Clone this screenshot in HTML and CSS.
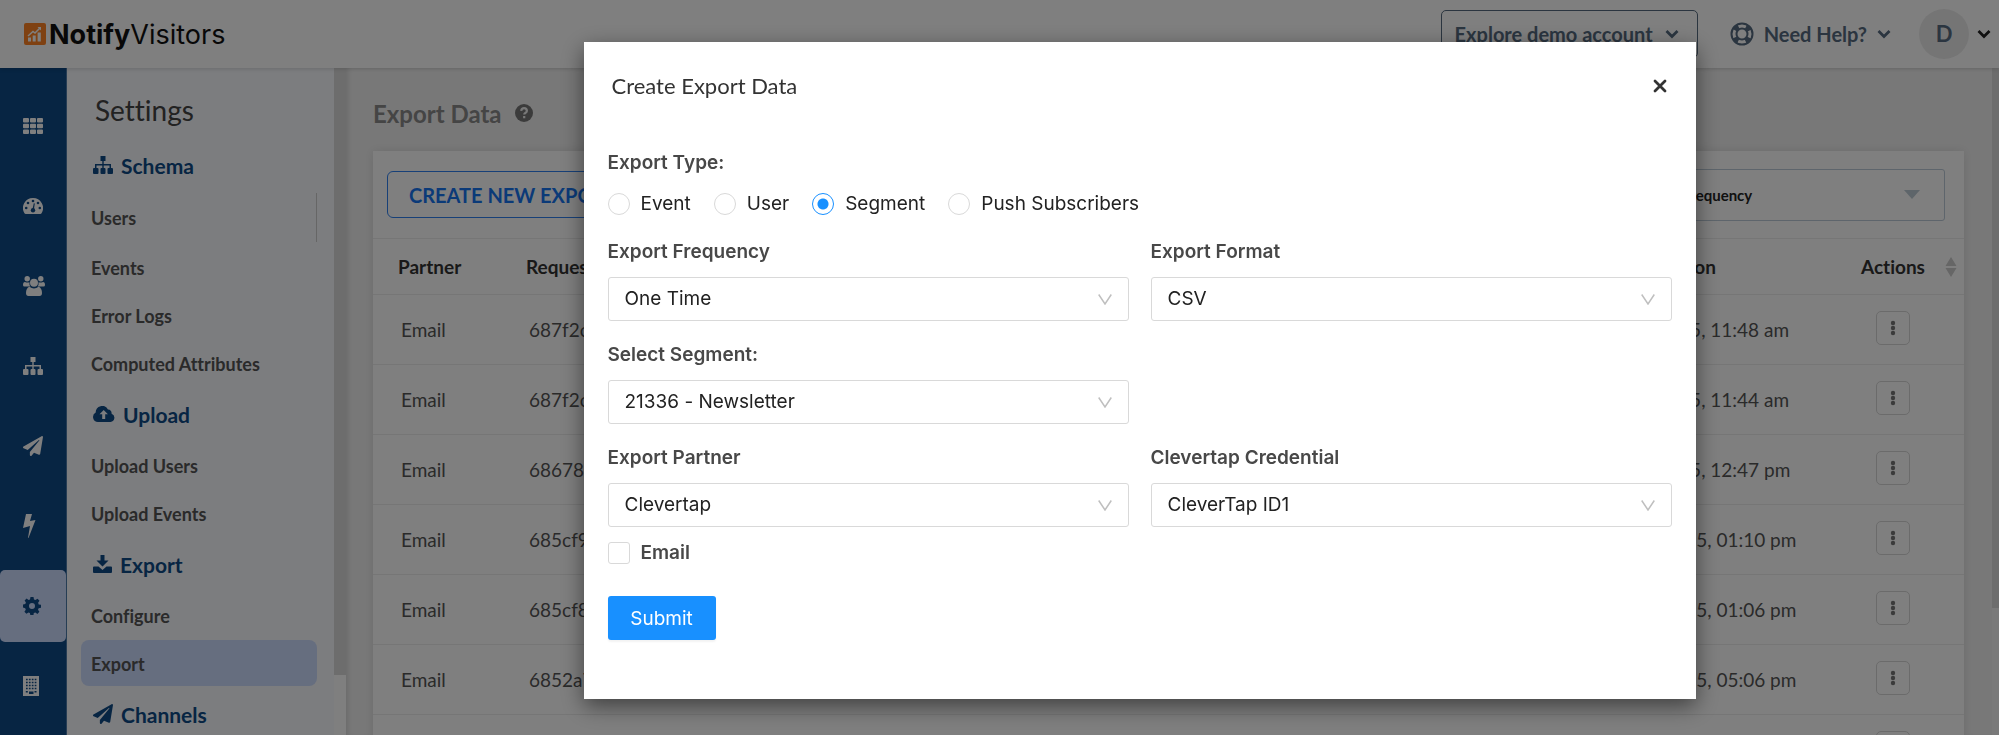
FILE: index.html
```
<!DOCTYPE html>
<html lang="en">
<head>
  <meta charset="UTF-8" />
  <meta name="viewport" content="width=device-width, initial-scale=1" />
  <title>Export Data - NotifyVisitors</title>
  <link rel="stylesheet" href="styles.css">
</head>
<body>
  <!-- ICONS -->
  <svg class="sprite" aria-hidden="true">
    <symbol id="i-sitemap" viewBox="0 0 20 18">
      <path d="M7.500 0h5v5h-1.800v3H18v4h1q1 0 1 1v4q0 1-1 1h-3.500q-1 0-1-1v-4q0-1 1-1h1V9.400h-5.800V12h.8q1 0 1 1v4q0 1-1 1H8.500q-1 0-1-1v-4q0-1 1-1h.8V9.400H3.500V12h1q1 0 1 1v4q0 1-1 1H1q-1 0-1-1v-4q0-1 1-1h1V8h7.300V5H7.500z"/>
    </symbol>
    <symbol id="i-plane" viewBox="0 0 512 512">
      <path d="M476 3.200L12.500 270.600c-18.100 10.400-15.800 35.600 2.200 43.200L121 358.400l287.300-253.200c5.500-4.900 13.300 2.600 8.600 8.300L176 407v80.500c0 23.600 28.500 32.900 42.500 15.800L282 426l124.600 52.200c14.200 6 30.400-2.900 33-18.200l72-432C515 7.800 493.300-6.800 476 3.200z"/>
    </symbol>
    <symbol id="i-chevron" viewBox="0 0 14 10">
      <path d="M1.500 2l5.500 5.500L12.500 2" fill="none" stroke="currentColor" stroke-width="2.800"/>
    </symbol>
    <symbol id="i-dots" viewBox="0 0 6 16">
      <circle cx="3" cy="3" r="2.200"/><circle cx="3" cy="8" r="2.200"/><circle cx="3" cy="13" r="2.200"/>
    </symbol>
  </svg>

  <!-- HEADER -->
  <header class="topbar">
    <a class="logo" href="#">
      <svg width="22" height="22" viewBox="0 0 22 22">
        <rect width="22" height="22" rx="2" fill="#ff8324"/>
        <path d="M4 18.500v-4h3v4zM8.700 18.500v-6h3v6zM13.600 18.500V9.500h3.200v9z" fill="#fff"/>
        <path d="M4 13l5-4.500 2 1.500 5-5" fill="none" stroke="#fff" stroke-width="1.500"/>
        <path d="M13.500 4h3.500v3.500z" fill="#fff"/>
      </svg>
      <span><b>Notify</b>Visitors</span>
    </a>
    <div class="topbar-right">
      <button class="btn-demo">Explore demo account <svg class="chevron"><use href="#i-chevron"/></svg></button>
      <button class="btn-help">
        <svg class="ring" width="24" height="24" viewBox="0 0 24 24" stroke="currentColor">
          <circle cx="12" cy="12" r="10.500" stroke-width="2"/>
          <circle cx="12" cy="12" r="5.500" stroke-width="2"/>
          <circle cx="12" cy="12" r="8" stroke-width="5" stroke-dasharray="5 7.566" stroke-dashoffset="-3.800"/>
        </svg>
        Need Help? <svg class="chevron"><use href="#i-chevron"/></svg>
      </button>
      <button class="btn-account"><span class="avatar">D</span> <svg class="chevron"><use href="#i-chevron"/></svg></button>
    </div>
  </header>

  <div class="layout">
    <!-- RAIL -->
    <nav class="rail" aria-label="Main">
      <a href="#" aria-label="Apps">
        <svg width="20" height="16" viewBox="0 0 20 16"><path d="M1 0h4q1 0 1 1v2.500q0 1-1 1H1q-1 0-1-1V1q0-1 1-1zM8 0h4q1 0 1 1v2.500q0 1-1 1H8q-1 0-1-1V1q0-1 1-1zM15 0h4q1 0 1 1v2.500q0 1-1 1h-4q-1 0-1-1V1q0-1 1-1zM1 5.700h4q1 0 1 1v2.500q0 1-1 1H1q-1 0-1-1V6.700q0-1 1-1zM8 5.700h4q1 0 1 1v2.500q0 1-1 1H8q-1 0-1-1V6.700q0-1 1-1zM15 5.700h4q1 0 1 1v2.500q0 1-1 1h-4q-1 0-1-1V6.700q0-1 1-1zM1 11.500h4q1 0 1 1V15q0 1-1 1H1q-1 0-1-1v-2.500q0-1 1-1zM8 11.500h4q1 0 1 1V15q0 1-1 1H8q-1 0-1-1v-2.500q0-1 1-1zM15 11.500h4q1 0 1 1V15q0 1-1 1h-4q-1 0-1-1v-2.500q0-1 1-1z"/></svg>
      </a>
      <a href="#" aria-label="Dashboard">
        <svg width="20" height="16" viewBox="0 0 20 16">
          <path d="M10 0a10 10 0 0 1 8.700 15q-.5 1-1.500 1H2.800q-1 0-1.500-1A10 10 0 0 1 10 0z"/>
          <g fill="#0e4a86"><circle cx="10" cy="3" r="1.300"/><circle cx="5" cy="5" r="1.300"/><circle cx="15" cy="5" r="1.300"/><circle cx="3.200" cy="10" r="1.300"/><circle cx="16.800" cy="10" r="1.300"/><circle cx="10" cy="12.300" r="2.200"/><path d="M10.800 5.200l1 .3-1 6.500H9.300z"/></g>
        </svg>
      </a>
      <a href="#" aria-label="Users">
        <svg width="22" height="20" viewBox="0 0 22 20">
          <circle cx="4.200" cy="2.700" r="2.700"/><circle cx="17.800" cy="2.700" r="2.700"/>
          <path d="M2 6q2 1 4.500.3Q6 9 7.500 10.500H3.500H1.500Q0 10.500 0 9q0-3 2-3zM20 6q-2 1-4.500.3Q16 9 14.500 10.500h6q1.500 0 1.500-1.500 0-3-2-3z"/>
          <circle cx="11" cy="6.700" r="4"/>
          <path d="M6.500 10.800Q11 14 15.500 10.800 19 12 19 17q0 3-2.500 3h-11Q3 20 3 17q0-5 3.500-6.200z"/>
        </svg>
      </a>
      <a href="#" aria-label="Structure"><svg width="20" height="18"><use href="#i-sitemap"/></svg></a>
      <a href="#" aria-label="Campaigns"><svg width="20" height="20"><use href="#i-plane"/></svg></a>
      <a href="#" aria-label="Automation">
        <svg width="13" height="24" viewBox="0 0 13 24"><path d="M3 0h6L7 7l5.500-1L5.500 24l-.5-.3L7 12l-7 2z"/></svg>
      </a>
      <a href="#" class="active" aria-label="Settings">
        <svg width="18" height="18" viewBox="0 0 18 18">
          <path fill-rule="evenodd" d="M7.500 0h3l.5 2.500 1.400.6 2.100-1.400 2 2-1.400 2.100.6 1.600 2.300.4v3l-2.400.5-.6 1.500 1.400 2-2 2.100-2-1.400-1.600.6-.4 2.300h-3l-.5-2.400-1.400-.6-2.100 1.400-2-2 1.400-2.100-.6-1.500L0 10.500v-3L2.300 7l.6-1.500-1.300-2 2-2 2 1.400L7 2.400zM9 6a3 3 0 1 0 0 6 3 3 0 0 0 0-6z"/>
        </svg>
      </a>
      <a href="#" aria-label="Company">
        <svg width="16" height="20" viewBox="0 0 16 20">
          <path d="M0 0h16v20H0z"/>
          <path d="M3 3.500h10.500M3 6.500h10.500M3 9.500h10.500M3 12.500h10.500" stroke="#0e4a86" stroke-width="1.700" stroke-dasharray="1.700 1.200"/>
          <path d="M2.800 15h2v1.500h-2zM6 15.500h4.500V18H6zM11.500 15h2v1.500h-2z" fill="#0e4a86"/>
        </svg>
      </a>
    </nav>

    <!-- SETTINGS MENU -->
    <aside class="sidebar">
      <nav class="menu" aria-label="Settings">
        <h2 class="menu-title">Settings</h2>
        <h3 class="menu-section"><svg width="20" height="18"><use href="#i-sitemap"/></svg>Schema</h3>
        <a class="menu-item divided" href="#">Users</a>
        <a class="menu-item" href="#">Events</a>
        <a class="menu-item" href="#">Error Logs</a>
        <a class="menu-item" href="#">Computed Attributes</a>
        <h3 class="menu-section">
          <svg width="22" height="16" viewBox="0 0 22 16"><path fill-rule="evenodd" d="M5 16a5 5 0 0 1-2.300-9.400A6.500 6.500 0 0 1 15 3.500a4 4 0 0 1 3.600 4.200A4.300 4.300 0 0 1 17.500 16zM10.700 4L6.500 8.300h2.700V13h3V8.300h2.700z"/></svg>Upload
        </h3>
        <a class="menu-item" href="#">Upload Users</a>
        <a class="menu-item" href="#">Upload Events</a>
        <h3 class="menu-section">
          <svg width="19" height="18" viewBox="0 0 19 18"><path d="M7.500 0h4v5.500h4L9.500 11.500 3.500 5.500h4zM1 11.500h4.500l4 3.500 4-3.500H18q1 0 1 1V17q0 1-1 1H1q-1 0-1-1v-4.500q0-1 1-1z"/></svg>Export
        </h3>
        <a class="menu-item" href="#">Configure</a>
        <a class="menu-item selected" href="#">Export</a>
        <h3 class="menu-section"><svg width="20" height="20"><use href="#i-plane"/></svg>Channels</h3>
      </nav>
      <div class="scrollbar"><div class="thumb"></div></div>
    </aside>

    <!-- CONTENT -->
    <main class="content">
      <h1 class="page-title">Export Data
        <svg width="18" height="18" viewBox="0 0 18 18"><circle cx="9" cy="9" r="9" fill="#777"/><path d="M6.200 6.800Q6.500 4.200 9.100 4.200T11.900 6.800Q11.900 8 10.600 8.700 9.200 9.400 9.200 10.600M9.200 12v2.300" fill="none" stroke="#f1f1f1" stroke-width="2.200"/></svg>
      </h1>
      <section class="card">
        <div class="toolbar">
          <button class="btn-create">CREATE NEW EXPORT</button>
          <select class="filter" aria-label="Frequency filter">
            <option>Export Frequency</option>
          </select>
        </div>
        <table class="exports">
          <colgroup>
            <col class="col-partner"><col><col><col><col class="col-date"><col class="col-actions">
          </colgroup>
          <thead>
            <tr>
              <th>Partner</th><th>Request ID</th><th>Type</th><th>Status</th><th>Requested on</th>
              <th class="actions">Actions
                <svg class="sort" width="12" height="20" viewBox="0 0 12 20"><path d="M6 0l5.500 9H.5zM6 20l5.500-9H.5z"/></svg>
              </th>
            </tr>
          </thead>
          <tbody>
            <tr><td>Email</td><td>687f2c81d04b</td><td>Segment</td><td>Completed</td><td>22 Jul 2025, 11:48 am</td><td class="actions"><button class="btn-more" aria-label="More"><svg width="6" height="16"><use href="#i-dots"/></svg></button></td></tr>
            <tr><td>Email</td><td>687f2c0a93e1</td><td>Segment</td><td>Completed</td><td>22 Jul 2025, 11:44 am</td><td class="actions"><button class="btn-more" aria-label="More"><svg width="6" height="16"><use href="#i-dots"/></svg></button></td></tr>
            <tr><td>Email</td><td>68678e51f7a2</td><td>Event</td><td>Completed</td><td>04 Jul 2025, 12:47 pm</td><td class="actions"><button class="btn-more" aria-label="More"><svg width="6" height="16"><use href="#i-dots"/></svg></button></td></tr>
            <tr><td>Email</td><td>685cf9b6210d</td><td>User</td><td>Completed</td><td>26 Jun 2025, 01:10 pm</td><td class="actions"><button class="btn-more" aria-label="More"><svg width="6" height="16"><use href="#i-dots"/></svg></button></td></tr>
            <tr><td>Email</td><td>685cf8c4e35f</td><td>User</td><td>Completed</td><td>26 Jun 2025, 01:06 pm</td><td class="actions"><button class="btn-more" aria-label="More"><svg width="6" height="16"><use href="#i-dots"/></svg></button></td></tr>
            <tr><td>Email</td><td>6852a7093bd8</td><td>Event</td><td>Completed</td><td>18 Jun 2025, 05:06 pm</td><td class="actions"><button class="btn-more" aria-label="More"><svg width="6" height="16"><use href="#i-dots"/></svg></button></td></tr>
            <tr><td></td><td></td><td></td><td></td><td></td><td class="actions"><button class="btn-more" aria-label="More"><svg width="6" height="16"><use href="#i-dots"/></svg></button></td></tr>
          </tbody>
        </table>
      </section>
    </main>
    <div class="page-scrollbar"><div class="thumb"></div></div>
  </div>

  <!-- MODAL -->
  <div class="overlay">
    <div class="modal" role="dialog" aria-modal="true" aria-labelledby="modal-title">
      <div class="modal-header">
        <h2 id="modal-title">Create Export Data</h2>
        <button class="btn-close" aria-label="Close">
          <svg width="14" height="14" viewBox="0 0 14 14"><path d="M2 2l10 10M12 2L2 12" stroke="currentColor" stroke-width="2.800" stroke-linecap="round"/></svg>
        </button>
      </div>
      <form class="export-form">
        <fieldset class="export-type">
          <legend>Export Type:</legend>
          <div class="radios">
            <label><input type="radio" name="type">Event</label>
            <label><input type="radio" name="type">User</label>
            <label><input type="radio" name="type" checked>Segment</label>
            <label><input type="radio" name="type">Push Subscribers</label>
          </div>
        </fieldset>
        <div class="fields">
          <div class="field">
            <label for="frequency">Export Frequency</label>
            <select id="frequency"><option>One Time</option></select>
          </div>
          <div class="field">
            <label for="format">Export Format</label>
            <select id="format"><option>CSV</option></select>
          </div>
          <div class="field first">
            <label for="segment">Select Segment:</label>
            <select id="segment"><option>21336 - Newsletter</option></select>
          </div>
          <div class="field first">
            <label for="partner">Export Partner</label>
            <select id="partner"><option>Clevertap</option></select>
          </div>
          <div class="field">
            <label for="credential">Clevertap Credential</label>
            <select id="credential"><option>CleverTap ID1</option></select>
          </div>
        </div>
        <label class="check"><input type="checkbox">Email</label>
        <button class="btn-submit" type="button">Submit</button>
      </form>
    </div>
  </div>
</body>
</html>
```

FILE: styles.css
```
:root {
  --navy: #0e4a86;
  --blue: #1890ff;
  --line: #ececec;
  --selected: #ccdcff;
}

* {
  box-sizing: border-box;
}

body {
  font-family: Lato, sans-serif;
  font-variant-ligatures: none;
  margin: 0;
  height: 100vh;
  display: flex;
  flex-direction: column;
  overflow: hidden;
  background: #f1f1f1;
  color: #555;
}

h1, h2, h3 {
  margin: 0;
}

a {
  color: inherit;
  text-decoration: none;
}

button {
  font-family: inherit;
  background: none;
  border: none;
  padding: 0;
  cursor: pointer;
}

svg {
  fill: currentColor;
  flex: none;
}

.sprite {
  display: none;
}

.chevron {
  width: 14px;
  height: 10px;
}

.ring {
  fill: none;
}

/* header */
.topbar {
  flex: none;
  height: 68px;
  padding: 0 8px 0 24px;
  display: flex;
  justify-content: space-between;
  background: #fff;
  box-shadow: 0 1px 4px rgba(0, 0, 0, 0.15);
  position: relative;
}

.logo {
  display: flex;
  align-items: center;
  gap: 3px;
  font-family: Inter, sans-serif;
  font-size: 27px;
  color: #111;
}

.topbar-right {
  display: flex;
  align-items: center;
  gap: 28px;
}

.topbar-right button {
  display: flex;
  align-items: center;
  gap: 12px;
  font-size: 20px;
  font-weight: bold;
  color: #566b80;
}

.topbar-right .btn-demo {
  height: 48px;
  padding: 0 18px 0 13px;
  border: 1px solid #566b80;
  border-radius: 5px;
  margin-right: 4px;
}

.topbar-right .btn-help {
  gap: 10px;
}

.topbar-right .btn-account {
  gap: 8px;
}

.btn-account .chevron {
  color: #222;
}

.avatar {
  width: 50px;
  height: 50px;
  border-radius: 50%;
  background: #ebebeb;
  font-size: 22px;
  line-height: 50px;
  text-align: center;
}

/* rail */
.layout {
  flex: 1;
  min-height: 0;
  display: flex;
}

.rail {
  flex: none;
  width: 67px;
  padding-top: 22px;
  background: var(--navy);
  border-right: 1px solid #4c7aa8;
  color: #fff;
}

.rail a {
  display: flex;
  align-items: center;
  height: 72px;
  margin: 0 0 8px;
  padding-left: 23px;
}

.rail a.active {
  background: var(--selected);
  border-radius: 5px;
  color: var(--navy);
}

/* settings menu */
.sidebar {
  flex: none;
  width: 279px;
  display: flex;
  background: #f8fafe;
}

.menu {
  flex: 1;
  padding: 14px 17px 0 14px;
}

.menu-title {
  padding-left: 14px;
  font-size: 28px;
  font-weight: normal;
  line-height: 56px;
  color: #444;
}

.menu-section {
  display: flex;
  align-items: center;
  gap: 8px;
  height: 54px;
  padding-left: 12px;
  font-size: 21px;
  color: var(--navy);
}

.menu-item {
  display: block;
  height: 46px;
  margin: 1px 0;
  padding-left: 10px;
  font-size: 18px;
  font-weight: bold;
  line-height: 48px;
}

.menu-item + .menu-item {
  margin-top: 2px;
}

.menu-item.divided {
  height: 49px;
  border-right: 1px solid #ccc;
  line-height: 50px;
}

.menu-item.selected {
  border-radius: 8px;
  background: var(--selected);
}

.scrollbar {
  width: 12px;
  background: #fff;
}

.scrollbar .thumb {
  height: 91%;
  background: #dadada;
}

/* content */
.content {
  flex: 1;
  min-width: 0;
  overflow: hidden;
  padding: 17px 28px 0 27px;
  box-shadow: inset 5px 0 6px -4px rgba(0, 0, 0, 0.15);
}

.page-title {
  display: flex;
  align-items: center;
  gap: 13px;
  height: 56px;
  margin-bottom: 10px;
  font-size: 24px;
  color: #8a8a8a;
}

.card {
  background: #fff;
  box-shadow: 0 0 10px rgba(0, 0, 0, 0.1);
}

.toolbar {
  display: flex;
  justify-content: space-between;
  align-items: center;
  height: 87px;
  padding: 0 19px 0 14px;
}

.btn-create {
  height: 47px;
  padding: 0 21px;
  border: 1px solid #2f81f0;
  border-radius: 6px;
  font-size: 20px;
  font-weight: bold;
  color: #1675f0;
}

.filter {
  appearance: none;
  width: 350px;
  height: 52px;
  padding: 0 22px 0 38px;
  border: 1px solid #bccbd8;
  border-radius: 3px;
  background: #fff url("data:image/svg+xml,%3Csvg xmlns='http://www.w3.org/2000/svg' width='16' height='9'%3E%3Cpath d='M0 0h16L8 9z' fill='%23bccad4'/%3E%3C/svg%3E") no-repeat right 24px center;
  font-family: inherit;
  font-size: 15px;
  font-weight: bold;
  color: #222;
}

.exports {
  width: 100%;
  table-layout: fixed;
  border-collapse: collapse;
  font-size: 19px;
  text-align: left;
}

.col-partner {
  width: 128px;
}

.col-date {
  width: 247px;
}

.col-actions {
  width: 142px;
}

.exports th {
  height: 56px;
  padding: 0 0 0 25px;
  border-top: 1px solid var(--line);
  color: #333;
}

.exports td {
  height: 70px;
  padding: 0 0 0 28px;
  border-top: 1px solid var(--line);
}

.exports .actions {
  padding: 0;
  text-align: center;
  position: relative;
}

.exports td.actions {
  padding-bottom: 4px;
}

.sort {
  position: absolute;
  top: 18px;
  right: 7px;
  color: #ccc;
}

.btn-more {
  display: inline-flex;
  align-items: center;
  justify-content: center;
  width: 34px;
  height: 34px;
  border: 1px solid #d6d6d6;
  border-radius: 5px;
  color: #777;
}

.page-scrollbar {
  width: 7px;
  background: #f4f4f4;
}

.page-scrollbar .thumb {
  height: 81%;
  background: #dadada;
}

/* modal */
.overlay {
  position: fixed;
  inset: 0;
  padding: 42px 0 0 280px;
  background: rgba(0, 0, 0, 0.5);
}

.modal {
  max-width: 1112px;
  margin: 0 auto;
  padding: 0 24px 59px;
  background: #fff;
  box-shadow: 0 7px 21px rgba(0, 0, 0, 0.5);
}

.modal-header {
  display: flex;
  justify-content: space-between;
  align-items: center;
  height: 87px;
  padding: 0 5px 0 4px;
  color: #333;
}

.modal-header h2 {
  font-size: 22px;
  font-weight: normal;
}

.btn-close {
  display: flex;
  color: inherit;
}

.export-form {
  padding-top: 19px;
  font-family: Inter, sans-serif;
  font-size: 19px;
  line-height: 30px;
  color: #222;
}

.export-type {
  margin: 0 0 18px;
  padding: 0;
  border: none;
}

.export-type legend {
  padding: 0;
}

.export-type legend,
.field label,
.check {
  font-weight: 600;
  color: #484848;
}

.radios {
  display: flex;
  gap: 23px;
  margin-top: 11px;
}

.radios label,
.check {
  display: flex;
  align-items: center;
  gap: 11px;
}

.radios input,
.check input {
  appearance: none;
  flex: none;
  width: 22px;
  height: 22px;
  margin: 0;
  border: 1px solid #d9d9d9;
  border-radius: 50%;
  background: #fff;
}

.radios input:checked {
  border-color: var(--blue);
  background: radial-gradient(circle, var(--blue) 5px, #fff 6px);
}

.check input {
  border-radius: 3px;
}

.fields {
  display: grid;
  grid-template-columns: 1fr 1fr;
  gap: 19px 22px;
}

.field {
  display: flex;
  flex-direction: column;
  gap: 10px;
}

.field.first {
  grid-column: 1;
}

.field select {
  appearance: none;
  height: 44px;
  padding: 0 40px 0 16px;
  border: 1px solid #d9d9d9;
  border-radius: 3px;
  background: #fff url("data:image/svg+xml,%3Csvg xmlns='http://www.w3.org/2000/svg' width='14' height='11'%3E%3Cpath d='M.7.5L7 10 13.300.5' fill='none' stroke='%23bfbfbf' stroke-width='1.500'/%3E%3C/svg%3E") no-repeat right 16px center;
  font: inherit;
  color: inherit;
}

.check {
  width: max-content;
  margin: 11px 0 28px;
}

.btn-submit {
  width: 108px;
  height: 44px;
  border-radius: 3px;
  background: var(--blue);
  box-shadow: 0 2px 2px rgba(0, 0, 0, 0.05);
  font-size: 19px;
  color: #fff;
}
```
